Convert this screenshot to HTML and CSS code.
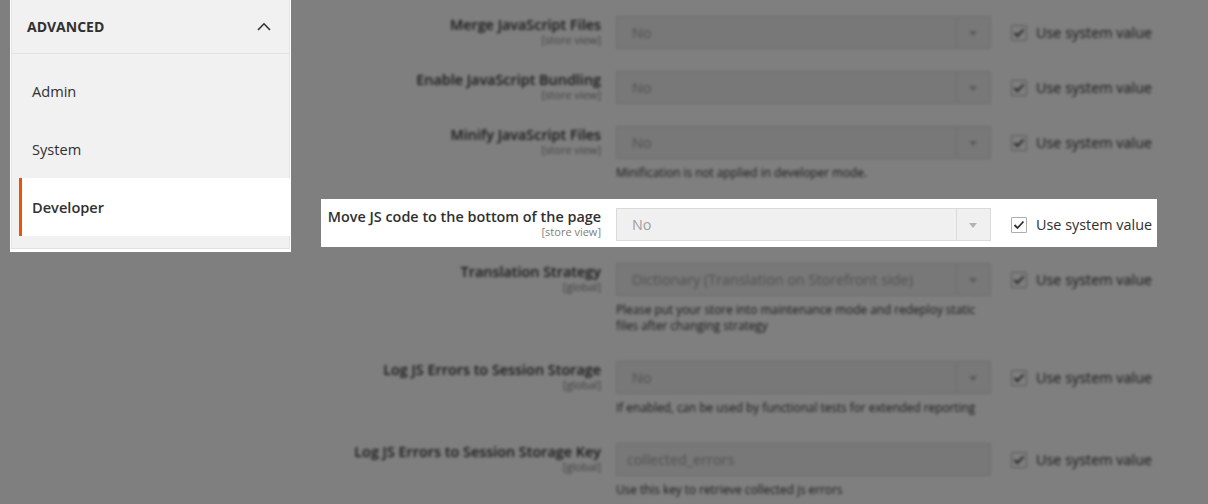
FILE: index.html
```html
<!DOCTYPE html>
<html lang="en">
<head>
  <meta charset="UTF-8">
  <title>Developer - Configuration</title>
  <link rel="stylesheet" href="styles.css">
</head>
<body>
  <div class="page">

    <!-- left side nav (highlighted) -->
    <div class="nav-wrap">
      <div class="nav">
        <div class="nav-title">
          <span>Advanced</span>
          <svg class="chevron" width="14" height="9" viewBox="0 0 14 9">
            <path d="M1 8 L7 1.8 L13 8" fill="none" stroke="#303030" stroke-width="1.6"/>
          </svg>
        </div>
        <ul class="nav-list">
          <li class="nav-item">Admin</li>
          <li class="nav-item">System</li>
          <li class="nav-item active">Developer</li>
        </ul>
      </div>
    </div>

    <div class="main">

      <div class="row dim">
        <div class="row-label">
          <div class="label-title">Merge JavaScript Files</div>
          <div class="label-scope">[store view]</div>
        </div>
        <div class="control">
          <div class="select"><span class="select-value">No</span><span class="select-arrow"></span></div>
        </div>
        <div class="use-default"><span class="checkbox"><svg width="12" height="10" viewBox="0 0 12 10"><path d="M1.5 5 L4.5 8 L10.5 1.5" fill="none" stroke="#303030" stroke-width="1.8"/></svg></span>Use system value</div>
      </div>

      <div class="row dim">
        <div class="row-label">
          <div class="label-title">Enable JavaScript Bundling</div>
          <div class="label-scope">[store view]</div>
        </div>
        <div class="control">
          <div class="select"><span class="select-value">No</span><span class="select-arrow"></span></div>
        </div>
        <div class="use-default"><span class="checkbox"><svg width="12" height="10" viewBox="0 0 12 10"><path d="M1.5 5 L4.5 8 L10.5 1.5" fill="none" stroke="#303030" stroke-width="1.8"/></svg></span>Use system value</div>
      </div>

      <div class="row dim">
        <div class="row-label">
          <div class="label-title">Minify JavaScript Files</div>
          <div class="label-scope">[store view]</div>
        </div>
        <div class="control">
          <div class="select"><span class="select-value">No</span><span class="select-arrow"></span></div>
          <p class="note">Minification is not applied in developer mode.</p>
        </div>
        <div class="use-default"><span class="checkbox"><svg width="12" height="10" viewBox="0 0 12 10"><path d="M1.5 5 L4.5 8 L10.5 1.5" fill="none" stroke="#303030" stroke-width="1.8"/></svg></span>Use system value</div>
      </div>

      <div class="row focus">
        <div class="row-label">
          <div class="label-title">Move JS code to the bottom of the page</div>
          <div class="label-scope">[store view]</div>
        </div>
        <div class="control">
          <div class="select"><span class="select-value">No</span><span class="select-arrow"></span></div>
        </div>
        <div class="use-default"><span class="checkbox"><svg width="12" height="10" viewBox="0 0 12 10"><path d="M1.5 5 L4.5 8 L10.5 1.5" fill="none" stroke="#303030" stroke-width="1.8"/></svg></span>Use system value</div>
      </div>

      <div class="row dim">
        <div class="row-label">
          <div class="label-title">Translation Strategy</div>
          <div class="label-scope">[global]</div>
        </div>
        <div class="control">
          <div class="select"><span class="select-value">Dictionary (Translation on Storefront side)</span><span class="select-arrow"></span></div>
          <p class="note">Please put your store into maintenance mode and redeploy static files after changing strategy</p>
        </div>
        <div class="use-default"><span class="checkbox"><svg width="12" height="10" viewBox="0 0 12 10"><path d="M1.5 5 L4.5 8 L10.5 1.5" fill="none" stroke="#303030" stroke-width="1.8"/></svg></span>Use system value</div>
      </div>

      <div class="row dim">
        <div class="row-label">
          <div class="label-title">Log JS Errors to Session Storage</div>
          <div class="label-scope">[global]</div>
        </div>
        <div class="control">
          <div class="select"><span class="select-value">No</span><span class="select-arrow"></span></div>
          <p class="note">If enabled, can be used by functional tests for extended reporting</p>
        </div>
        <div class="use-default"><span class="checkbox"><svg width="12" height="10" viewBox="0 0 12 10"><path d="M1.5 5 L4.5 8 L10.5 1.5" fill="none" stroke="#303030" stroke-width="1.8"/></svg></span>Use system value</div>
      </div>

      <div class="row dim">
        <div class="row-label">
          <div class="label-title">Log JS Errors to Session Storage Key</div>
          <div class="label-scope">[global]</div>
        </div>
        <div class="control">
          <div class="select input"><span class="select-value">collected_errors</span></div>
          <p class="note">Use this key to retrieve collected js errors</p>
        </div>
        <div class="use-default"><span class="checkbox"><svg width="12" height="10" viewBox="0 0 12 10"><path d="M1.5 5 L4.5 8 L10.5 1.5" fill="none" stroke="#303030" stroke-width="1.8"/></svg></span>Use system value</div>
      </div>

    </div>
  </div>

  <!-- dark layer over everything except the highlighted parts -->
  <div class="overlay"></div>
</body>
</html>
```

FILE: styles.css
```css
* {
  margin: 0;
  padding: 0;
  box-sizing: border-box;
}

body {
  height: 504px;
  overflow: hidden;
  background-color: #fff;
  font-family: "Open Sans", "Liberation Sans", sans-serif;
  color: #303030;
}

.page {
  display: flex;
  align-items: flex-start;
  gap: 30px;
  padding-left: 10px;
}

.overlay {
  position: fixed;
  top: 0;
  left: 0;
  right: 0;
  bottom: 0;
  z-index: 1;
  background-color: rgba(0, 0, 0, 0.5);
}

/* side nav */
.nav-wrap {
  position: relative;
  z-index: 2;
  width: 281px;
  padding: 0 1px 3px 1px;
  background-color: #fff;
}

.nav {
  background-color: #f1f1f1;
  border: 1px solid #e3e3e3;
  border-top: none;
}

.nav-title {
  display: flex;
  align-items: center;
  justify-content: space-between;
  height: 54px;
  padding: 0 18px 0 15px;
  border-bottom: 1px solid #e3e3e3;
  font-size: 14px;
  font-weight: 700;
  text-transform: uppercase;
  color: #303030;
}

.nav-list {
  list-style: none;
  padding: 8px 0 12px 0;
}

.nav-item {
  height: 58px;
  line-height: 58px;
  margin-left: 7px;
  margin-right: -1px;
  padding-left: 10px;
  border-left: 3px solid transparent;
  font-size: 14.6px;
  color: #303030;
}

.nav-item.active {
  background-color: #fff;
  border-left-color: #eb5202;
  font-weight: 600;
}

/* config rows */
.main {
  width: 836px;
  padding-top: 7px;
}

.row {
  display: grid;
  grid-template-columns: 275px 375px 1fr;
  column-gap: 15px;
  padding: 9px 6px 6px 5px;
  margin-bottom: 7px;
}

.row.dim {
  filter: blur(1.4px);
}

.row.focus {
  position: relative;
  z-index: 2;
  background-color: #fff;
}

.row-label {
  text-align: right;
}

.label-title {
  font-size: 14.4px;
  font-weight: 600;
  line-height: 17px;
  white-space: nowrap;
}

.label-scope {
  font-size: 11px;
  line-height: 14px;
  color: #808080;
}

.select {
  display: flex;
  align-items: center;
  height: 33px;
  background-color: #f0f0f0;
  border: 1px solid #dadada;
  font-size: 14.4px;
  color: #a0a0a0;
}

.select-value {
  flex: 1;
  padding-left: 15px;
  white-space: nowrap;
  overflow: hidden;
}

.select.input .select-value {
  padding-left: 10px;
}

.select-arrow {
  position: relative;
  width: 34px;
  height: 100%;
  border-left: 1px solid #dadada;
}

.select-arrow::after {
  content: "";
  position: absolute;
  left: 12px;
  top: 14px;
  border-left: 4px solid transparent;
  border-right: 4px solid transparent;
  border-top: 5px solid #b3b3b3;
}

.note {
  margin: 5px 0 6px 0;
  font-size: 11.8px;
  line-height: 16px;
  color: #303030;
}

.use-default {
  display: flex;
  align-items: center;
  height: 33px;
  margin-left: 5px;
  font-size: 14.4px;
  color: #303030;
  white-space: nowrap;
}

.checkbox {
  display: flex;
  align-items: center;
  justify-content: center;
  width: 16px;
  height: 16px;
  margin-right: 9px;
  background-color: #fff;
  border: 1px solid #adadad;
  border-radius: 1px;
}
```
